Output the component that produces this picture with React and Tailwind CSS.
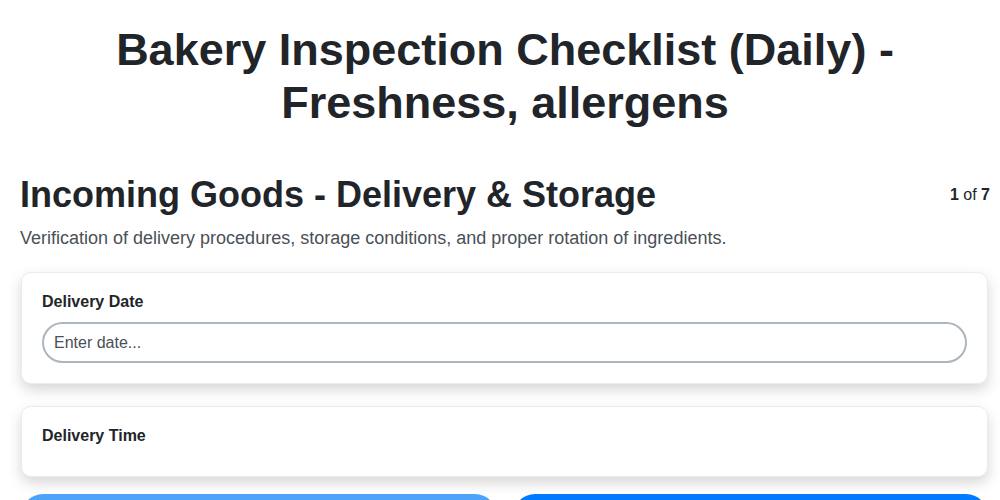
import React, { useState } from 'react'

export default function App() {
  const [date, setDate] = useState('')

  return (
    <div className="h-screen overflow-hidden bg-white pl-5 pr-2.5 text-[#212529]" style={{ fontFamily: '"Liberation Sans", Arial, sans-serif' }}>
      {/* Titulo */}
      <h1 className="pt-[23px] text-center text-[45px] font-bold leading-[53px]">
        Bakery Inspection Checklist (Daily) -<br />Freshness, allergens
      </h1>

      {/* Secao */}
      <div className="mt-[44px] flex items-start justify-between">
        <h2 className="text-[36px] font-bold leading-[1.2]">Incoming Goods - Delivery &amp; Storage</h2>
        <div className="mt-[10px] text-base">
          <span className="font-bold">1</span> of <span className="font-bold">7</span>
        </div>
      </div>
      <p className="mt-[9px] text-[18px] text-[#495057]">
        Verification of delivery procedures, storage conditions, and proper rotation of ingredients.
      </p>

      <div className="mt-[20px] flex flex-col gap-[22px]">
        <div className="ml-px mr-0.5 rounded-[10px] border border-[#e9ecef] bg-white px-5 pb-5 pt-[17px] shadow-[0_6px_14px_rgba(0,0,0,0.16)]">
          <label className="block text-base font-bold">Delivery Date</label>
          <input
            value={date}
            onChange={e => setDate(e.target.value)}
            placeholder="Enter date..."
            className="mt-[8px] h-[41px] w-full rounded-full border-2 border-[#adb5bd] px-2.5 text-base text-[#212529] outline-none placeholder:text-[#495057]"
          />
        </div>

        <div className="ml-px mr-0.5 h-[71px] shrink-0 rounded-[10px] border border-[#e9ecef] bg-white px-5 pt-[17px] shadow-[0_6px_14px_rgba(0,0,0,0.16)]">
          <label className="block text-base font-bold">Delivery Time</label>
        </div>
      </div>

      <div className="mt-[17px] ml-px mr-0.5 flex gap-4">
        <button className="h-11 flex-1 rounded-full bg-[#4da3f7] font-bold text-white">Previous</button>
        <button className="h-11 flex-1 rounded-full bg-[#007bff] font-bold text-white">Next</button>
      </div>
    </div>
  )
}
